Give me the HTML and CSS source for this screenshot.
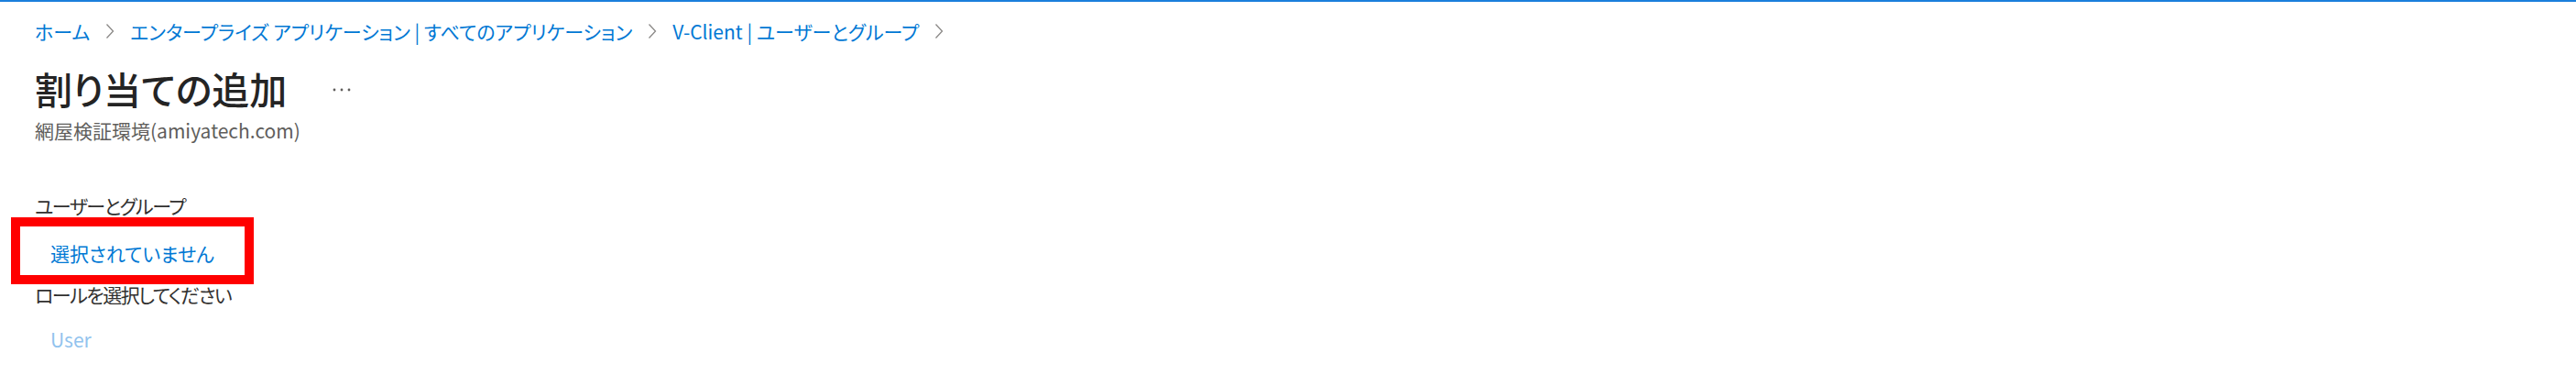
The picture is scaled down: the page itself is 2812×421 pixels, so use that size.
FILE: index.html
```html
<!DOCTYPE html>
<html lang="ja">
<head>
    <meta charset="UTF-8">
    <meta name="viewport" content="width=device-width, initial-scale=1.0">
    <title>割り当ての追加</title>
    <link rel="stylesheet" href="styles.css">
</head>
<body>
    <div class="top-bar"></div>
    <div class="page">
        <nav class="breadcrumb">
            <a href="#">ホーム</a>
            <svg class="chevron" viewBox="0 0 10 18"><polyline points="1.5,1.5 8.5,9 1.5,16.5"/></svg>
            <a href="#">エンタープライズ アプリケーション | すべてのアプリケーション</a>
            <svg class="chevron" viewBox="0 0 10 18"><polyline points="1.5,1.5 8.5,9 1.5,16.5"/></svg>
            <a href="#">V-Client | ユーザーとグループ</a>
            <svg class="chevron" viewBox="0 0 10 18"><polyline points="1.5,1.5 8.5,9 1.5,16.5"/></svg>
        </nav>

        <div class="title-row">
            <h1>割り当ての追加</h1>
            <button class="more" aria-label="その他">
                <svg viewBox="0 0 20 4"><circle cx="2" cy="2" r="1.4"/><circle cx="10" cy="2" r="1.4"/><circle cx="18" cy="2" r="1.4"/></svg>
            </button>
        </div>
        <div class="subtitle">網屋検証環境(amiyatech.com)</div>

        <div class="form">
            <div class="field-label users-label">ユーザーとグループ</div>
            <div class="field-value">
                <a href="#">選択されていません</a>
                <span class="highlight"></span> <!-- annotation box drawn over the field -->
            </div>
            <div class="field-label role-label">ロールを選択してください</div>
            <div class="field-value role-value">
                <a href="#" class="disabled">User</a>
            </div>
        </div>
    </div>
</body>
</html>
```

FILE: styles.css
```css
body {
    font-family: "Noto Sans CJK JP", "Noto Sans", sans-serif;
    margin: 0;
    background-color: #ffffff;
    color: #323130;
    font-feature-settings: "palt";
}

a {
    color: #0078d4;
    text-decoration: none;
}

.top-bar {
    height: 2px;
    background-color: #1b7fdc;
}

.page {
    padding: 18px 38px 0;
}

.breadcrumb {
    display: flex;
    align-items: center;
    gap: 17px;
    font-size: 21px;
    line-height: 28px;
    height: 28px;
}

.chevron {
    width: 10px;
    height: 18px;
    fill: none;
    stroke: #8a8886;
    stroke-width: 1.3;
}

.title-row {
    display: flex;
    align-items: center;
    margin-top: 24px;
    height: 48px;
}

.title-row h1 {
    margin: 0;
    font-size: 41px;
    line-height: 48px;
    font-weight: 500;
    color: #242424;
}

.more {
    border: none;
    background: none;
    padding: 0;
    margin-left: 50px;
    margin-top: 4px;
    width: 20px;
    height: 4px;
    display: flex;
}

.more svg {
    width: 20px;
    height: 4px;
    fill: #605e5c;
}

.subtitle {
    margin-top: 9px;
    font-size: 21px;
    line-height: 26px;
    color: #605e5c;
}

.form {
    margin-top: 55px;
}

.field-label {
    font-size: 21px;
    line-height: 28px;
    letter-spacing: -1.5px;
    color: #323130;
}

.field-value {
    position: relative;
    padding-left: 17px;
    font-size: 21px;
    line-height: 28px;
    margin-top: 24px;
}

.role-label {
    margin-top: 17px;
}

.role-value {
    margin-top: 21px;
}

.field-value a.disabled {
    color: #91c3ee;
}

.highlight {
    position: absolute;
    left: -26px;
    top: -25px;
    width: 265px;
    height: 73px;
    box-sizing: border-box;
    border: 10px solid #ff0000;
    pointer-events: none;
}
```
